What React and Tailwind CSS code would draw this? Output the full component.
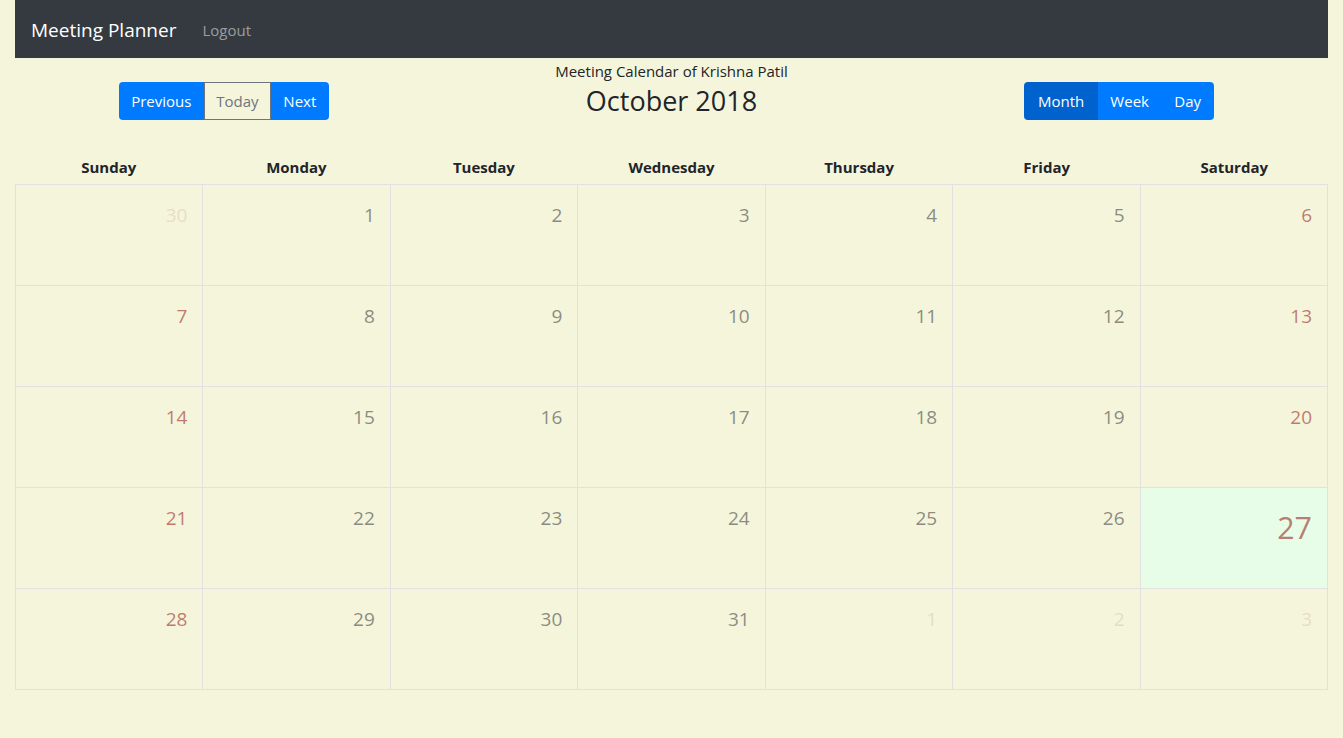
import React from 'react';

const days = ['Sunday', 'Monday', 'Tuesday', 'Wednesday', 'Thursday', 'Friday', 'Saturday'];

// grille d'octobre 2018 (commence le dimanche 30 septembre)
function buildWeeks() {
  const cells = [{ n: 30, out: true }];
  for (let d = 1; d <= 31; d++) cells.push({ n: d, out: false });
  [1, 2, 3].forEach((d) => cells.push({ n: d, out: true }));
  const weeks = [];
  for (let i = 0; i < cells.length; i += 7) weeks.push(cells.slice(i, i + 7));
  return weeks;
}

function DayCell({ day, weekend }) {
  const today = !day.out && day.n === 27;
  let color = weekend ? 'text-[#8b0000]' : 'text-[#212529]';
  let opacity = day.out ? 'opacity-10' : 'opacity-50';
  return (
    <div className={`h-[101px] border-r border-b border-[#e1e1e1] ${today ? 'bg-[#e8fde7]' : ''}`}>
      <div
        className={`float-right mr-[15px] ${today ? 'mt-[17px] text-[30.4px] leading-[1.5]' : 'mt-[16px] text-[19px] leading-[1.5]'} ${color} ${opacity}`}
      >
        {day.n}
      </div>
    </div>
  );
}

export default function App() {
  const weeks = buildWeeks();

  return (
    <div className="min-h-[738px] bg-[#f5f5dc] px-[15px] text-[#212529]" style={{ fontFamily: '"Open Sans", "Noto Sans", sans-serif' }}>
      {/* Navbar */}
      <nav className="flex h-[58px] items-center bg-[#343a40] px-[16px] pt-[3px]">
        <span className="mr-[18px] text-[19px] text-white">Meeting Planner</span>
        <a className="px-[8px] text-[15px] text-white/50">Logout</a>
      </nav>

      {/* barre de navigation du calendrier */}
      <div className="grid grid-cols-3">
        <div className="flex justify-center pr-[20px] pt-[24px]">
          <div className="flex h-[38px] overflow-hidden rounded-[4px] text-[15px]">
            <button className="w-[85px] bg-[#007bff] pt-[1px] text-white">Previous</button>
            <button className="w-[67px] border border-[#6c757d] pt-[1px] text-[#6c757d]">Today</button>
            <button className="w-[58px] bg-[#007bff] pt-[1px] text-white">Next</button>
          </div>
        </div>
        <div className="flex flex-col items-center pt-[3px]">
          <div className="text-[15px] leading-[20px]">Meeting Calendar of Krishna Patil</div>
          <h3 className="mt-[2px] text-[27px] leading-[36px]">October 2018</h3>
        </div>
        <div className="flex justify-center pl-[20px] pt-[24px]">
          <div className="flex h-[38px] overflow-hidden rounded-[4px] text-[15px] text-white">
            <button className="w-[74px] bg-[#0062cc] pt-[1px]">Month</button>
            <button className="w-[63px] bg-[#007bff] pt-[1px]">Week</button>
            <button className="w-[53px] bg-[#007bff] pt-[1px]">Day</button>
          </div>
        </div>
      </div>

      {/* En-tête des jours */}
      <div className="mt-[32px] grid h-[32px] grid-cols-7 items-center">
        {days.map((d) => (
          <div key={d} className="pb-[2px] text-center text-[15px] font-bold">{d}</div>
        ))}
      </div>

      {/* Grille du mois */}
      <div className="grid grid-cols-7 border-l border-t border-[#e1e1e1]">
        {weeks.map((week, wi) =>
          week.map((day, di) => (
            <DayCell key={`${wi}-${di}`} day={day} weekend={di === 0 || di === 6} />
          ))
        )}
      </div>
    </div>
  );
}
